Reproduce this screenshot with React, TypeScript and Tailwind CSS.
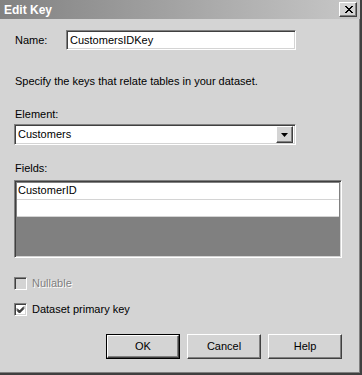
const sunken =
  "border border-t-[#808080] border-l-[#808080] border-r-white border-b-white shadow-[inset_1px_1px_0_#404040,inset_-1px_-1px_0_#d4d4d4]";
const raised =
  "border border-t-white border-l-white border-r-[#404040] border-b-[#404040] shadow-[inset_-1px_-1px_0_#808080]";

function Check({ checked, disabled, label }: { checked?: boolean; disabled?: boolean; label: string }) {
  return (
    <div className="flex items-center gap-[5px] h-[14px]">
      <div className={`w-[13px] h-[13px] flex items-center justify-center ${sunken} ${disabled ? "bg-[#d4d4d4]" : "bg-white"}`}>
        {checked && (
          <svg width="9" height="9" viewBox="0 0 9 9">
            <path d="M1 3.5 L3.5 6 L8 1.5 M1 4.5 L3.5 7 L8 2.5 M1 5.5 L3.5 8 L8 3.5" stroke="#000" strokeWidth="1" fill="none" />
          </svg>
        )}
      </div>
      <span className={disabled ? "text-[#808080] [text-shadow:1px_1px_0_#fff]" : "text-black"}>{label}</span>
    </div>
  );
}

function Button({ label, isDefault }: { label: string; isDefault?: boolean }) {
  return (
    <div className={`w-[74px] h-[25px] ${isDefault ? "border border-black" : ""}`}>
      <div className={`w-full h-full flex items-center justify-center bg-[#d4d4d4] ${raised}`}>{label}</div>
    </div>
  );
}

export default function App() {
  return (
    <div
      className="w-[362px] h-[375px] bg-[#d4d4d4] text-[11px] text-black flex flex-col border-r-2 border-b-2 border-r-[#404040] border-b-[#404040]"
      style={{ fontFamily: '"Liberation Sans", Arial, sans-serif' }}
    >
      {/* title bar */}
      <div className="h-[19px] flex items-center justify-between pl-[4px] pr-[3px] bg-gradient-to-r from-[#828282] to-[#c8c8c8]">
        <span className="text-white font-bold text-[12px]">Edit Key</span>
        <div className={`w-[18px] h-[15px] bg-[#d4d4d4] flex items-center justify-center ${raised}`}>
          <svg width="9" height="8" viewBox="0 0 9 8">
            <path d="M1 0 L8 7 M2 0 L9 7 M8 0 L1 7 M9 0 L2 7" stroke="#000" strokeWidth="1" fill="none" />
          </svg>
        </div>
      </div>

      <div className="flex flex-col px-[14px] border-r border-b border-r-[#808080] border-b-[#808080] flex-1">
        <div className="flex items-center mt-[11px] h-[20px]">
          <span className="w-[52px] pl-[1px]">Name:</span>
          <div className={`w-[230px] h-[20px] bg-white flex items-center px-[3px] ${sunken}`}>CustomersIDKey</div>
        </div>

        <div className="mt-[23px] pl-[1px]">Specify the keys that relate tables in your dataset.</div>

        <div className="mt-[16px] pl-[1px]">Element:</div>
        <div className={`mt-[2px] w-[282px] h-[21px] bg-white flex items-center justify-between pl-[3px] pr-[2px] ${sunken}`}>
          <span>Customers</span>
          <div className={`w-[17px] h-[17px] bg-[#d4d4d4] flex items-center justify-center ${raised}`}>
            <svg width="7" height="4" viewBox="0 0 7 4">
              <path d="M0 0 H7 L3.5 4 Z" fill="#000" />
            </svg>
          </div>
        </div>

        <div className="mt-[15px] pl-[1px]">Fields:</div>
        <div className={`mt-[3px] w-[328px] h-[78px] bg-[#808080] flex flex-col p-[2px] ${sunken}`}>
          <div className="h-[17px] bg-white flex items-center px-[1px] border-b border-b-[#d4d4d4]">CustomerID</div>
          <div className="h-[17px] bg-white border-b border-b-[#d4d4d4]"></div>
        </div>

        <div className="mt-[19px]">
          <Check disabled label="Nullable" />
        </div>
        <div className="mt-[12px]">
          <Check checked label="Dataset primary key" />
        </div>

        <div className="mt-[17px] flex justify-end gap-[7px] pr-[3px]">
          <Button label="OK" isDefault />
          <Button label="Cancel" />
          <Button label="Help" />
        </div>
      </div>
    </div>
  );
}
